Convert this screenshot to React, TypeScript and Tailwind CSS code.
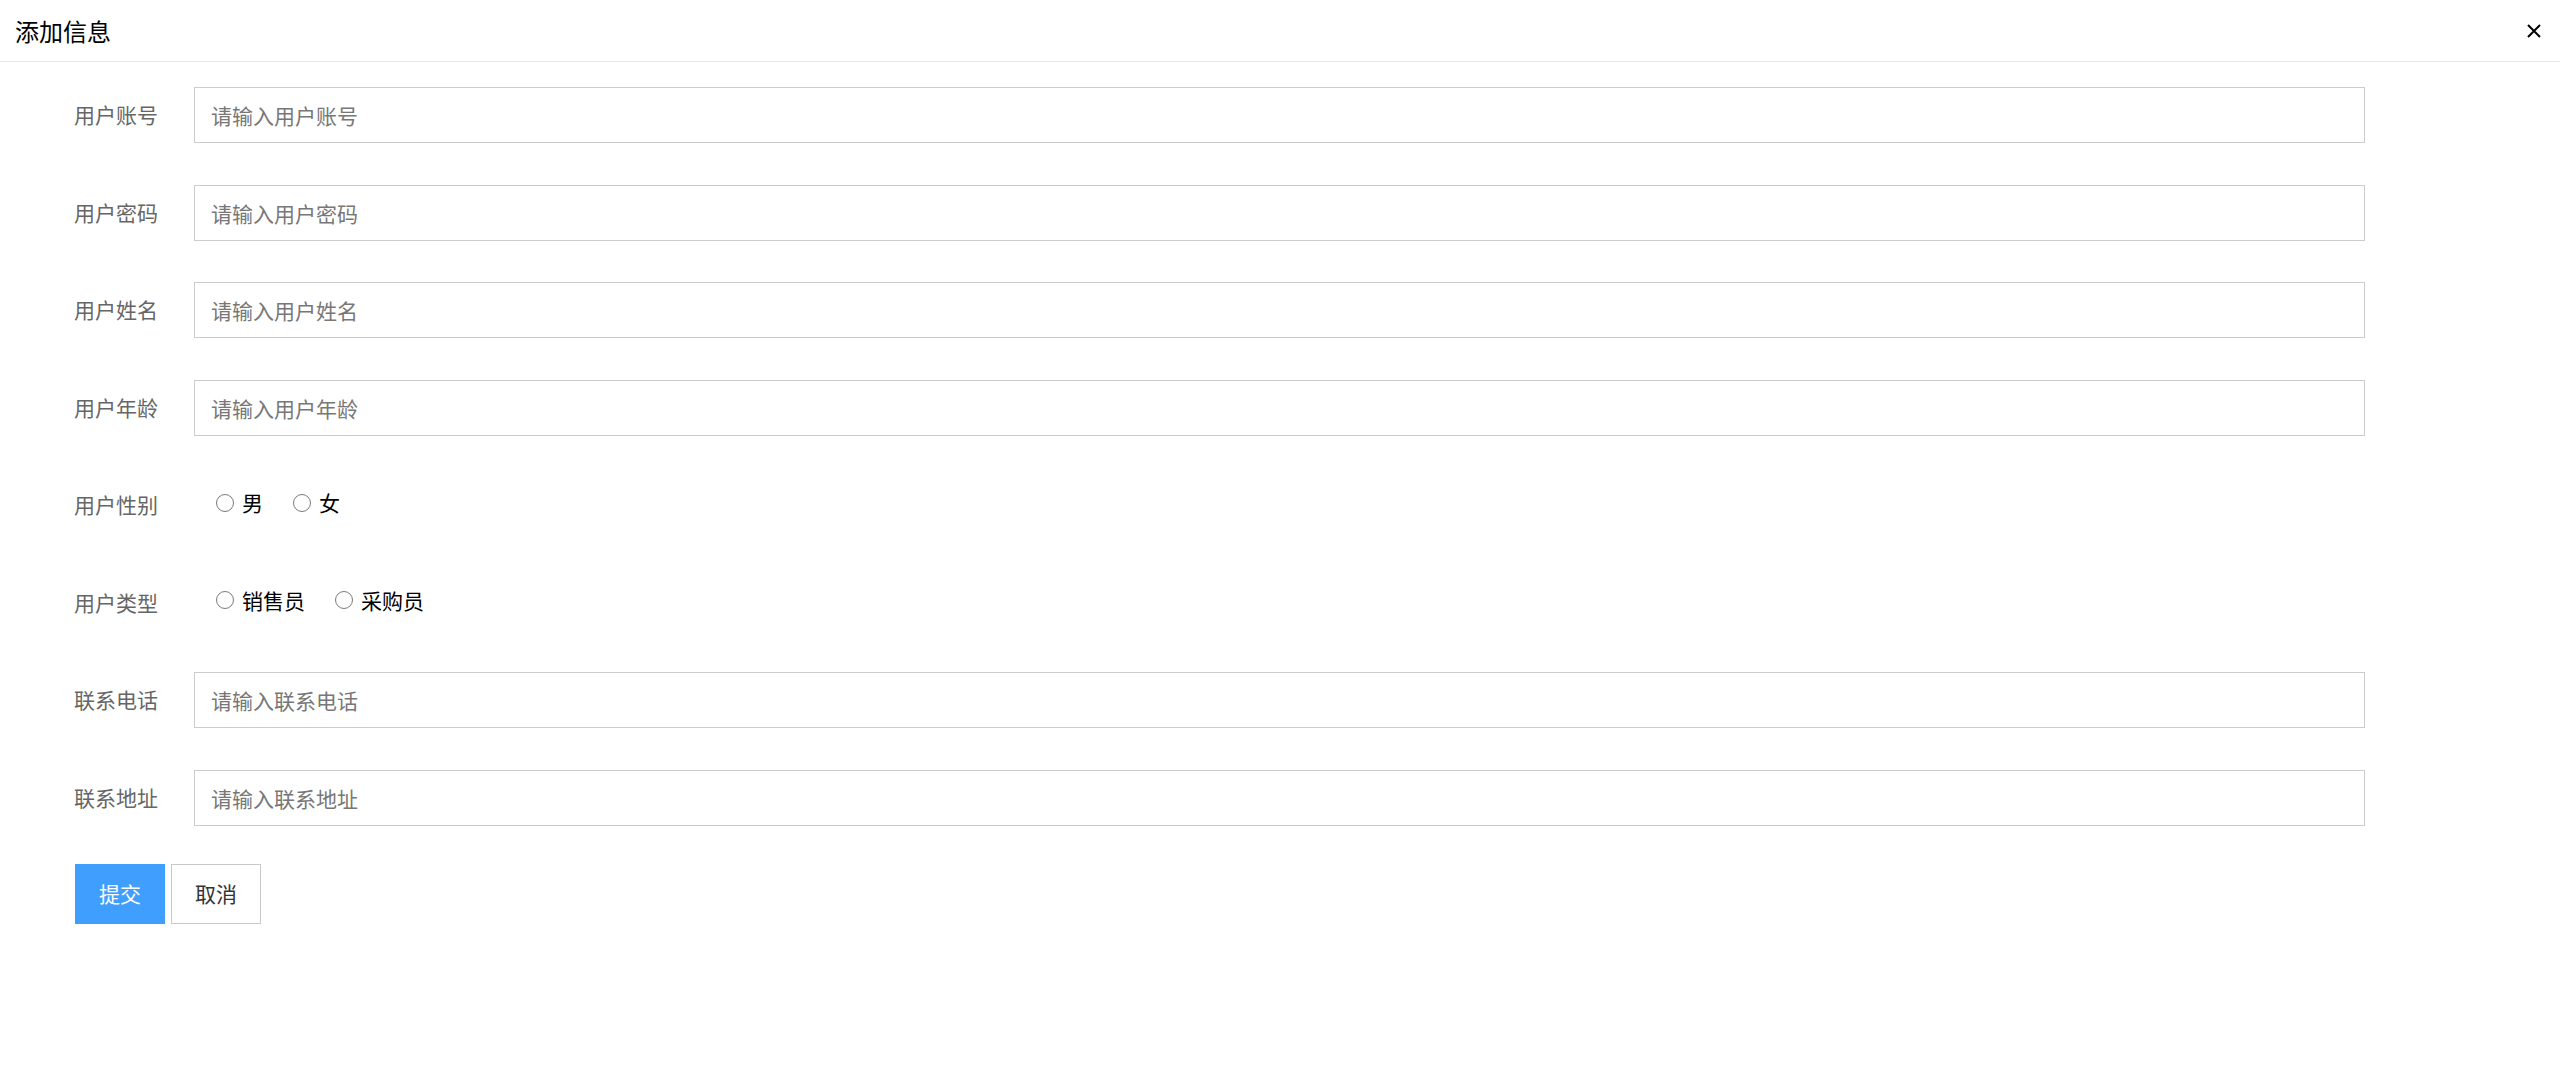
import { useState } from 'react';

const font = { fontFamily: '"Noto Sans CJK SC", "Noto Sans", sans-serif' };

type Field = { label: string; placeholder: string };

function TextRow({ label, placeholder }: Field) {
  return (
    <div className="flex items-center h-[56px]">
      <label className="w-[120px] pl-[74px] shrink-0 box-content text-[21px] text-[#666] whitespace-nowrap">{label}</label>
      <input
        type="text"
        placeholder={placeholder}
        className="w-[2171px] h-[56px] border border-[#cccccc] bg-white pl-[16px] text-[21px] text-[#333] outline-none placeholder:text-[#777]"
      />
    </div>
  );
}

function RadioRow({ label, options }: { label: string; options: string[] }) {
  const [val, setVal] = useState<string | null>(null);
  return (
    <div className="flex items-center h-[56px]">
      <label className="w-[120px] pl-[74px] shrink-0 box-content text-[21px] text-[#666] whitespace-nowrap">{label}</label>
      <div className="flex items-center gap-[30px] pl-[22px] -mt-[5px]">
        {options.map(o => (
          <button key={o} type="button" onClick={() => setVal(o)} className="flex items-center gap-[8px] cursor-pointer">
            <span className="w-[18px] h-[18px] rounded-full border-[1.5px] border-[#7a7a7a] bg-white flex items-center justify-center">
              {val === o && <span className="w-[9px] h-[9px] rounded-full bg-[#1a73e8]" />}
            </span>
            <span className="text-[21px] text-black leading-none">{o}</span>
          </button>
        ))}
      </div>
    </div>
  );
}

export default function App() {
  return (
    <div className="w-[2560px] min-h-[1074px] bg-white" style={font}>
      {/* title bar */}
      <div className="h-[62px] flex items-center justify-between border-b border-[#e8e8e8] pl-[15px] pr-[18px]">
        <h1 className="text-[24px] text-black leading-none">添加信息</h1>
        <button type="button" className="w-[16px] h-[16px] flex items-center justify-center">
          <svg width="14" height="14" viewBox="0 0 14 14" fill="none" stroke="#000" strokeWidth="2">
            <path d="M1 1L13 13M13 1L1 13" />
          </svg>
        </button>
      </div>

      <form className="pt-[25px]" onSubmit={e => e.preventDefault()}>
        <div className="flex flex-col gap-[41.5px]">
          <TextRow label="用户账号" placeholder="请输入用户账号" />
          <TextRow label="用户密码" placeholder="请输入用户密码" />
          <TextRow label="用户姓名" placeholder="请输入用户姓名" />
          <TextRow label="用户年龄" placeholder="请输入用户年龄" />
          <RadioRow label="用户性别" options={['男', '女']} />
          <RadioRow label="用户类型" options={['销售员', '采购员']} />
          <TextRow label="联系电话" placeholder="请输入联系电话" />
          <TextRow label="联系地址" placeholder="请输入联系地址" />
        </div>

        <div className="flex gap-[6px] pl-[75px] mt-[38.5px]">
          <button type="submit" className="w-[90px] h-[60px] bg-[#409eff] text-white text-[21px]">提交</button>
          <button type="button" className="w-[90px] h-[60px] bg-white border border-[#c9c9c9] text-[#333] text-[21px]">取消</button>
        </div>
      </form>
    </div>
  );
}
